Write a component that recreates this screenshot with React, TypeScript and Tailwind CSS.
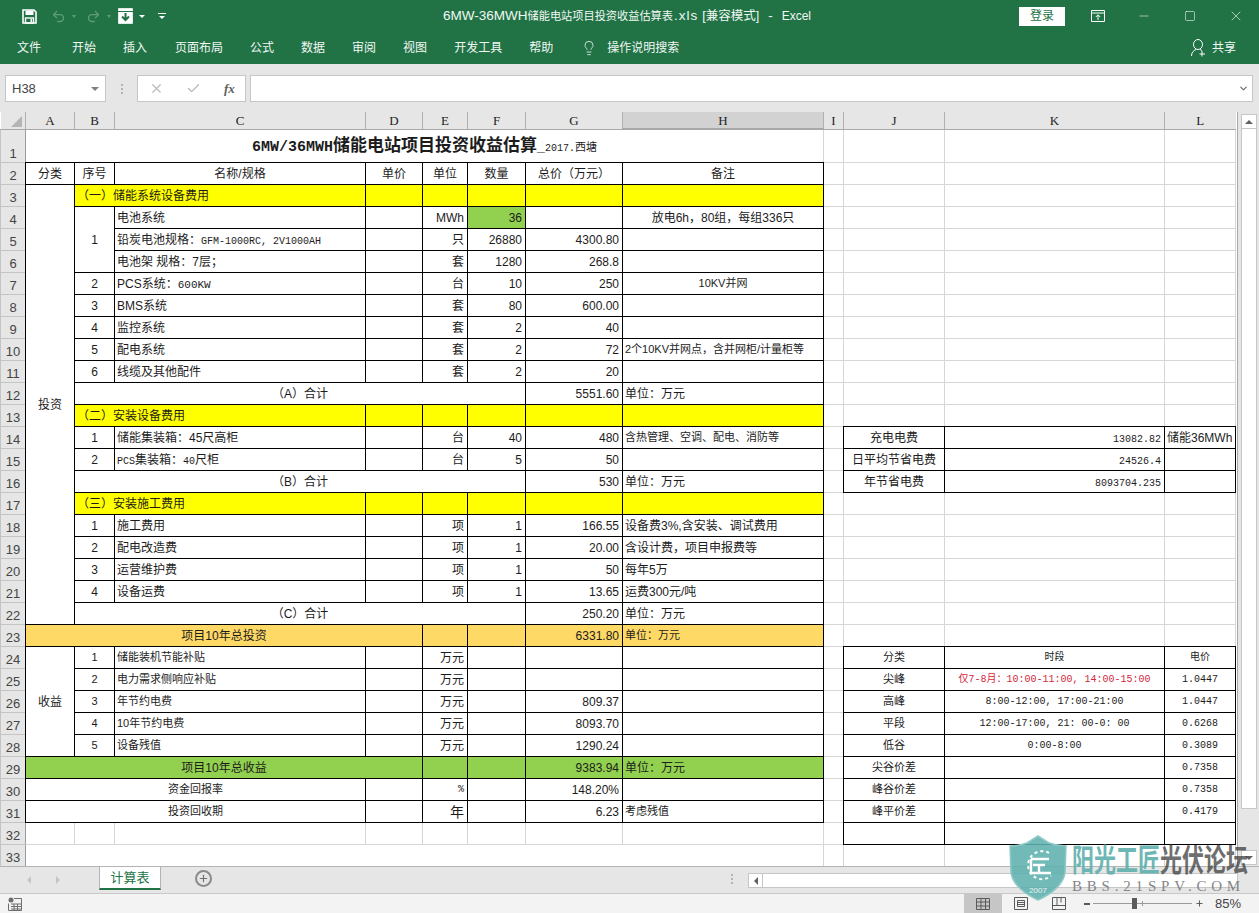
import React from "react";
import { Undo2, Redo2, ChevronDown, Check, X, Lightbulb, Minus, Square, Plus } from "lucide-react";

const FONT = "font-['Liberation_Sans','Noto_Sans_CJK_SC',sans-serif]";
const MONO = "font-['Liberation_Mono','Noto_Sans_CJK_SC',monospace]";

type TdProps = {
  b?: boolean;
  c?: string;
  colSpan?: number;
  rowSpan?: number;
  children?: React.ReactNode;
};

function Td({ b = true, c = "", colSpan, rowSpan, children }: TdProps) {
  const edge = b ? "border border-double border-black" : "border border-solid border-[#d6d6d6]";
  const pad = c.includes("text-[11px]") || colSpan === 8 ? "" : "pt-[2px]";
  return (
    <td colSpan={colSpan} rowSpan={rowSpan} className={`${edge} ${c} ${pad} overflow-hidden whitespace-nowrap align-middle`}>
      {children}
    </td>
  );
}

const CTR = "text-center";
const LFT = "text-left pl-[2px]";
const RGT = "text-right pr-[3px]";
const SM = "text-[11px]";
const YEL = "bg-[#ffff00]";
const ORG = "bg-[#ffd966]";
const GRN = "bg-[#92d050]";

const rightRows: Record<number, [React.ReactNode, React.ReactNode, React.ReactNode]> = {
  14: ["充电电费", <span className={`${MONO} text-[10px]`}>13082.82</span>, "储能36MWh"],
  15: ["日平均节省电费", <span className={`${MONO} text-[10px]`}>24526.4</span>, ""],
  16: ["年节省电费", <span className={`${MONO} text-[10px]`}>8093704.235</span>, ""],
};

const tariff: Record<number, [string, React.ReactNode, string]> = {
  24: ["分类", "时段", "电价"],
  25: ["尖峰", <span className="text-[#d2283c]">仅7-8月：10:00-11:00, 14:00-15:00</span>, "1.0447"],
  26: ["高峰", "8:00-12:00, 17:00-21:00", "1.0447"],
  27: ["平段", "12:00-17:00, 21: 00-0: 00", "0.6268"],
  28: ["低谷", "0:00-8:00", "0.3089"],
  29: ["尖谷价差", "", "0.7358"],
  30: ["峰谷价差", "", "0.7358"],
  31: ["峰平价差", "", "0.4179"],
  32: ["", "", ""],
};

function RightCells({ n }: { n: number }) {
  if (rightRows[n]) {
    const [j, k, l] = rightRows[n];
    return (
      <>
        <Td b={false} />
        <Td c={CTR}>{j}</Td>
        <Td c={RGT}>{k}</Td>
        <Td c={LFT}>{l}</Td>
      </>
    );
  }
  if (tariff[n]) {
    const [j, k, l] = tariff[n];
    return (
      <>
        <Td b={false} />
        <Td c={`${CTR} ${SM}`}>{j}</Td>
        <Td c={`${CTR} ${MONO} text-[10px]`}>{k}</Td>
        <Td c={`${CTR} ${MONO} text-[10px]`}>{l}</Td>
      </>
    );
  }
  return (
    <>
      <Td b={false} />
      <Td b={false} />
      <Td b={false} />
      <Td b={false} />
    </>
  );
}

function Row({ n, tall, children }: { n: number; tall?: boolean; children?: React.ReactNode }) {
  return (
    <tr className={tall ? "h-[33px]" : "h-[22px]"}>
      <th className="border border-solid border-[#c4c4c4] border-r-[#9c9c9c] bg-[#e6e6e6] p-0 align-bottom text-[13px] leading-[17px] font-normal text-[#444444]">
        {n}
      </th>
      {children}
      <RightCells n={n} />
    </tr>
  );
}

type LineProps = {
  n: number;
  lead?: React.ReactNode;
  seq?: string;
  seqCls?: string;
  name?: React.ReactNode;
  nameCls?: string;
  unit?: React.ReactNode;
  unitCls?: string;
  qty?: string;
  qtyCls?: string;
  total?: string;
  note?: React.ReactNode;
  noteCls?: string;
};

function Line({ n, lead, seq, seqCls = "", name, nameCls = "", unit, unitCls = "", qty, qtyCls = "", total, note, noteCls = LFT }: LineProps) {
  return (
    <Row n={n}>
      {lead}
      {seq !== undefined && <Td c={`${CTR} ${seqCls}`}>{seq}</Td>}
      <Td c={`${LFT} ${nameCls}`}>{name}</Td>
      <Td />
      <Td c={`${RGT} ${unitCls}`}>{unit}</Td>
      <Td c={`${RGT} ${qtyCls}`}>{qty}</Td>
      <Td c={RGT}>{total}</Td>
      <Td c={noteCls}>{note}</Td>
    </Row>
  );
}

function Band({ n, text }: { n: number; text: string }) {
  return (
    <Row n={n}>
      <Td colSpan={2} c={`${YEL} text-left pl-[2px]`}>{text}</Td>
      <Td c={YEL} />
      <Td c={YEL} />
      <Td c={YEL} />
      <Td c={YEL} />
      <Td c={YEL} />
    </Row>
  );
}

function Sum({ n, text, total }: { n: number; text: string; total: string }) {
  return (
    <Row n={n}>
      <Td colSpan={5} c={CTR}>{text}</Td>
      <Td c={RGT}>{total}</Td>
      <Td c={LFT}>单位：万元</Td>
    </Row>
  );
}

function Total({ n, text, total, bg, noteCls = "" }: { n: number; text: string; total: string; bg: string; noteCls?: string }) {
  return (
    <Row n={n}>
      <Td colSpan={4} c={`${bg} ${CTR}`}>{text}</Td>
      <Td c={bg} />
      <Td c={bg} />
      <Td c={`${bg} ${RGT}`}>{total}</Td>
      <Td c={`${bg} ${LFT} ${noteCls}`}>单位：万元</Td>
    </Row>
  );
}

const widths = [25, 49, 40, 251, 57, 45, 58, 97, 201, 20, 101, 220, 71];
const cols = ["A", "B", "C", "D", "E", "F", "G", "H", "I", "J", "K", "L"];

function Sheet() {
  return (
    <table className={`table-fixed border-collapse w-[1235px] ${FONT} text-[12px] leading-none text-[#1c1c1c] bg-white`}>
      <colgroup>
        {widths.map((w, i) => (
          <col key={i} style={{ width: w }} />
        ))}
      </colgroup>
      <thead>
        <tr className="h-[17px]">
          <th className="relative bg-[#e6e6e6] border-b border-solid border-[#a8a8a8] p-0">
            <span className="absolute right-[3px] bottom-[2px] w-0 h-0 border-l-[11px] border-l-transparent border-b-[11px] border-b-[#b4b4b4]" />
          </th>
          {cols.map((c) => (
            <th
              key={c}
              className={`font-['Liberation_Serif',serif] border-l border-b border-solid border-l-[#b0b0b0] border-b-[#a8a8a8] p-0 text-[13px] font-normal text-[#222222] ${
                c === "H" ? "bg-[#d2d2d2] border-b-2 border-b-[#217346]" : "bg-[#e6e6e6]"
              }`}
            >
              {c}
            </th>
          ))}
        </tr>
      </thead>
      <tbody>
        <Row n={1} tall>
          <Td b={false} colSpan={8} c={`${CTR} border-l-0`}>
            <span className={`${MONO} font-bold text-[15px]`}>6MW/36MWH</span>
            <span className="font-bold text-[17px]">储能电站项目投资收益估算</span>
            <span className="font-bold text-[14px]">_</span>
            <span className={`${MONO} text-[10px]`}>2017.</span>
            <span className="text-[11px]">西塘</span>
          </Td>
        </Row>
        <Row n={2}>
          <Td c={CTR}>分类</Td>
          <Td c={CTR}>序号</Td>
          <Td c={CTR}>名称/规格</Td>
          <Td c={CTR}>单价</Td>
          <Td c={CTR}>单位</Td>
          <Td c={CTR}>数量</Td>
          <Td c={CTR}>总价（万元）</Td>
          <Td c={CTR}>备注</Td>
        </Row>
        <Row n={3}>
          <Td rowSpan={20} c={CTR}>投资</Td>
          <Td colSpan={2} c={`${YEL} text-left pl-[2px]`}>（一）储能系统设备费用</Td>
          <Td c={YEL} />
          <Td c={YEL} />
          <Td c={YEL} />
          <Td c={YEL} />
          <Td c={YEL} />
        </Row>
        <Line
          n={4}
          lead={<Td rowSpan={3} c={CTR}>1</Td>}
          name="电池系统"
          unit="MWh"
          qty="36"
          qtyCls={GRN}
          note="放电6h，80组，每组336只"
          noteCls={CTR}
        />
        <Line
          n={5}
          name={
            <>
              铅炭电池规格：<span className={`${MONO} text-[10px]`}>GFM-1000RC, 2V1000AH</span>
            </>
          }
          unit="只"
          qty="26880"
          total="4300.80"
        />
        <Line n={6} name="电池架 规格：7层；" unit="套" qty="1280" total="268.8" />
        <Line
          n={7}
          seq="2"
          name={
            <>
              PCS系统：<span className={`${MONO} text-[11px]`}>600KW</span>
            </>
          }
          unit="台"
          qty="10"
          total="250"
          note="10KV并网"
          noteCls={`${CTR} ${SM}`}
        />
        <Line n={8} seq="3" name="BMS系统" unit="套" qty="80" total="600.00" />
        <Line n={9} seq="4" name="监控系统" unit="套" qty="2" total="40" />
        <Line
          n={10}
          seq="5"
          name="配电系统"
          unit="套"
          qty="2"
          total="72"
          note="2个10KV并网点，含并网柜/计量柜等"
          noteCls={`${LFT} ${SM}`}
        />
        <Line n={11} seq="6" name="线缆及其他配件" unit="套" qty="2" total="20" />
        <Sum n={12} text="（A）合计" total="5551.60" />
        <Band n={13} text="（二）安装设备费用" />
        <Line n={14} seq="1" name="储能集装箱：45尺高柜" unit="台" qty="40" total="480" note="含热管理、空调、配电、消防等" noteCls={`${LFT} ${SM}`} />
        <Line
          n={15}
          seq="2"
          name={
            <>
              <span className={`${MONO} text-[10px]`}>PCS</span>集装箱：<span className={`${MONO} text-[10px]`}>40</span>尺柜
            </>
          }
          unit="台"
          qty="5"
          total="50"
        />
        <Sum n={16} text="（B）合计" total="530" />
        <Band n={17} text="（三）安装施工费用" />
        <Line n={18} seq="1" name="施工费用" unit="项" qty="1" total="166.55" note="设备费3%,含安装、调试费用" />
        <Line n={19} seq="2" name="配电改造费" unit="项" qty="1" total="20.00" note="含设计费，项目申报费等" />
        <Line n={20} seq="3" name="运营维护费" unit="项" qty="1" total="50" note="每年5万" />
        <Line n={21} seq="4" name="设备运费" unit="项" qty="1" total="13.65" note="运费300元/吨" />
        <Sum n={22} text="（C）合计" total="250.20" />
        <Total n={23} text="项目10年总投资" total="6331.80" bg={ORG} noteCls={SM} />
        <Line
          n={24}
          lead={<Td rowSpan={5} c={CTR}>收益</Td>}
          seq="1"
          seqCls={SM}
          name="储能装机节能补贴"
          nameCls={SM}
          unit="万元"
        />
        <Line n={25} seq="2" seqCls={SM} name="电力需求侧响应补贴" nameCls={SM} unit="万元" />
        <Line n={26} seq="3" seqCls={SM} name="年节约电费" nameCls={SM} unit="万元" total="809.37" />
        <Line n={27} seq="4" seqCls={SM} name="10年节约电费" nameCls={SM} unit="万元" total="8093.70" />
        <Line n={28} seq="5" seqCls={SM} name="设备残值" nameCls={SM} unit="万元" total="1290.24" />
        <Total n={29} text="项目10年总收益" total="9383.94" bg={GRN} />
        <Row n={30}>
          <Td colSpan={3} c={`${CTR} ${SM}`}>资金回报率</Td>
          <Td />
          <Td c={`${RGT} ${MONO} text-[10px]`}>%</Td>
          <Td />
          <Td c={RGT}>148.20%</Td>
          <Td />
        </Row>
        <Row n={31}>
          <Td colSpan={3} c={`${CTR} ${SM}`}>投资回收期</Td>
          <Td />
          <Td c={`${RGT} text-[14px]`}>年</Td>
          <Td />
          <Td c={RGT}>6.23</Td>
          <Td c={`${LFT} ${SM}`}>考虑残值</Td>
        </Row>
        <Row n={32}>
          <Td b={false} />
          <Td b={false} />
          <Td b={false} />
          <Td b={false} />
          <Td b={false} />
          <Td b={false} />
          <Td b={false} />
          <Td b={false} />
        </Row>
        <Row n={33}>
          <Td b={false} colSpan={8} />
        </Row>
      </tbody>
    </table>
  );
}

function SaveIcon() {
  return (
    <svg width="15" height="15" viewBox="0 0 15 15" className="text-white">
      <path d="M1 1h11l2 2v11H1z" fill="none" stroke="currentColor" strokeWidth="1.6" />
      <rect x="3.5" y="1.5" width="8" height="4.5" fill="currentColor" />
      <rect x="3.5" y="9" width="8" height="5" fill="none" stroke="currentColor" strokeWidth="1.4" />
      <rect x="8.5" y="10" width="1.6" height="3" fill="currentColor" />
    </svg>
  );
}

function QatBox() {
  return (
    <svg width="15" height="16" viewBox="0 0 15 16">
      <rect x="0.7" y="0.7" width="13.6" height="14.6" fill="#ffffff" stroke="#ffffff" strokeWidth="1" />
      <rect x="0" y="3" width="15" height="1" fill="#217346" />
      <path d="M7.5 5v7M4 8.5l3.5 3.5L11 8.5" fill="none" stroke="#217346" strokeWidth="2" />
    </svg>
  );
}

function Caret() {
  return <span className="w-0 h-0 border-x-[3px] border-x-transparent border-t-[3px] border-t-white" />;
}

function ShareIcon() {
  return (
    <svg width="15" height="18" viewBox="0 0 15 18">
      <ellipse cx="7" cy="5.500" rx="4.500" ry="5" fill="none" stroke="#ffffff" strokeWidth="1" />
      <path d="M0.500 17c0-3.500 2-5.500 4.500-6.500M9 10.500c0.800 0.300 1.500 0.700 2 1.200" fill="none" stroke="#ffffff" strokeWidth="1" />
      <path d="M11 12v5.500M8.500 15h5.500" fill="none" stroke="#ffffff" strokeWidth="1" />
    </svg>
  );
}

function Shield() {
  return (
    <svg width="58" height="66" viewBox="0 0 58 66">
      <path d="M29 1 L40 8 Q48 11 57 11 L56 38 Q53 54 29 65 Q5 54 2 38 L1 11 Q10 11 18 8 Z" fill="#5fb0ae" fillOpacity="0.88" stroke="#8fc9c7" strokeWidth="1.500" />
      <path d="M40 18 A14 14 0 1 0 42 41" fill="none" stroke="#ffffff" strokeWidth="2" strokeDasharray="3 3" />
      <path d="M22 24 H40 M22 24 V38 M24 30 H36 M30 30 V38 M22 38 H42" fill="none" stroke="#ffffff" strokeWidth="2.400" />
      <text x="29" y="58" textAnchor="middle" fontSize="8" fill="#e6f4f4" fontFamily="Liberation Sans">2007</text>
    </svg>
  );
}

const ribbon: [string, string][] = [
  ["文件", "mr-[31px]"],
  ["开始", "mr-[27px]"],
  ["插入", "mr-[28px]"],
  ["页面布局", "mr-[27px]"],
  ["公式", "mr-[27px]"],
  ["数据", "mr-[27px]"],
  ["审阅", "mr-[27px]"],
  ["视图", "mr-[27px]"],
  ["开发工具", "mr-[27px]"],
  ["帮助", "mr-[28px]"],
];

export default function App() {
  return (
    <div className={`relative w-[1259px] h-[913px] overflow-hidden flex flex-col bg-[#e6e6e6] ${FONT} text-[12px]`}>
      {/* title bar */}
      <div className="h-[32px] shrink-0 bg-[#217346] flex items-center text-[#f1f7f3]">
        <div className="w-[443px] shrink-0 flex items-center pl-[22px]">
          <SaveIcon />
          <Undo2 size={15} strokeWidth={2.2} className="ml-[14px] text-[#5f9c7c]" />
          <span className="ml-[6px] w-0 h-0 border-x-[2px] border-x-transparent border-t-[3px] border-t-[#5f9c7c]" />
          <Redo2 size={15} strokeWidth={2.2} className="ml-[10px] text-[#5f9c7c]" />
          <span className="ml-[6px] w-0 h-0 border-x-[2px] border-x-transparent border-t-[3px] border-t-[#5f9c7c]" />
          <span className="ml-[7px] flex"><QatBox /></span>
          <span className="ml-[6px] flex"><Caret /></span>
          <span className="ml-[13px] flex flex-col items-center gap-[2px]">
            <span className="w-[8px] h-px bg-white" />
            <Caret />
          </span>
        </div>
        <div className="flex items-center whitespace-nowrap text-[13.5px]">
          <span>6MW-36MWH</span>
          <span className="text-[11.2px]">储能电站项目投资收益估算表</span>
          <span className="ml-[1px] tracking-[1px]">.xls</span>
          <span className="ml-[4px] text-[12.5px]">[兼容模式]</span>
          <span className="ml-[9px]">-</span>
          <span className="ml-[9px] text-[12px]">Excel</span>
        </div>
        <div className="flex-1 flex items-center justify-end">
          <div className="w-[46px] h-[19px] mr-[26px] bg-white text-[#217346] text-center leading-[19px]">登录</div>
          <svg width="14" height="12" viewBox="0 0 14 12" className="mr-[32px]">
            <path d="M0.500 0.500h13v11h-13zM0.500 3h13M7 10V5M4.800 7L7 4.800 9.200 7" fill="none" stroke="#ffffff" strokeWidth="1" />
          </svg>
          <Minus size={14} strokeWidth={1} className="mr-[33px]" />
          <Square size={12} strokeWidth={1.2} className="mr-[32px]" />
          <X size={16} strokeWidth={1} className="mr-[15px]" />
        </div>
      </div>

      {/* ribbon tabs */}
      <div className="h-[32px] shrink-0 bg-[#217346] flex items-center pl-[17px] text-[#f1f7f3] whitespace-nowrap">
        {ribbon.map(([t, m]) => (
          <span key={t} className={m}>{t}</span>
        ))}
        <Lightbulb size={16} strokeWidth={1.200} />
        <span className="ml-[10px]">操作说明搜索</span>
        <span className="ml-auto mr-[23px] flex items-center gap-[6px]">
          <ShareIcon />
          共享
        </span>
      </div>

      {/* formula bar */}
      <div className="h-[48px] shrink-0 flex items-start pt-[11px] pl-[5px] bg-[#e6e6e6]">
        <div className="w-[101px] h-[27px] bg-white border border-[#c6c6c6] flex items-center justify-between pl-[6px] pr-[6px] text-[#444444] text-[13px]">
          H38
          <span className="w-0 h-0 border-x-[4px] border-x-transparent border-t-[4px] border-t-[#808080]" />
        </div>
        <div className="w-[31px] h-[27px] flex flex-col items-center justify-center gap-[2px]">
          <span className="w-[2px] h-[2px] bg-[#b4b4b4]" />
          <span className="w-[2px] h-[2px] bg-[#b4b4b4]" />
          <span className="w-[2px] h-[2px] bg-[#b4b4b4]" />
        </div>
        <div className="w-[109px] h-[27px] bg-white border border-[#c6c6c6] flex items-center text-[#b8b8b8]">
          <X size={15} strokeWidth={1.800} className="ml-[11px]" />
          <Check size={15} strokeWidth={2} className="ml-[22px]" />
          <span className="ml-[23px] font-['Liberation_Serif'] italic font-bold text-[13px] text-[#606060]">fx</span>
        </div>
        <div className="w-[1003px] ml-[4px] h-[27px] bg-white border border-[#c6c6c6] flex items-center justify-end pr-[3px] text-[#6c6c6c]">
          <ChevronDown size={11} strokeWidth={2.600} />
        </div>
      </div>

      {/* sheet */}
      <div className="h-[754px] shrink-0 flex overflow-hidden bg-[#e6e6e6]">
        <div className="w-[1238px] shrink-0 border-r border-[#a8a8a8] bg-white overflow-hidden">
          <Sheet />
        </div>
        <div className="w-[3px] shrink-0 bg-[#e6e6e6]" />
        <div className="w-[16px] shrink-0 flex flex-col pt-[2px]">
          <div className="h-[15px] bg-white border border-[#c6c6c6] flex items-center justify-center">
            <span className="w-0 h-0 border-x-[4px] border-x-transparent border-b-[4px] border-b-[#606060]" />
          </div>
          <div className="h-[680px] bg-white border-x border-b border-[#c6c6c6]" />
          <div className="mt-auto h-[15px] mb-[1px] bg-white border border-[#c6c6c6] flex items-center justify-center">
            <span className="w-0 h-0 border-x-[4px] border-x-transparent border-t-[4px] border-t-[#606060]" />
          </div>
        </div>
      </div>

      {/* tab bar */}
      <div className="h-[28px] shrink-0 relative flex items-start bg-[#e6e6e6] border-t border-b border-t-[#b4b4b4] border-b-[#c8c8c8]">
        <span className="ml-[27px] mt-[9px] w-0 h-0 border-y-[4px] border-y-transparent border-r-[4px] border-r-[#c4c4c4]" />
        <span className="ml-[25px] mt-[9px] w-0 h-0 border-y-[4px] border-y-transparent border-l-[4px] border-l-[#c4c4c4]" />
        <div className="ml-[39px] w-[62px] h-[23px] bg-white border-x border-b-2 border-x-[#b4b4b4] border-b-[#217346] text-center text-[13px] leading-[21px] text-[#217346]">
          计算表
        </div>
        <div className="ml-[34px] mt-[3px] w-[17px] h-[17px] rounded-full border-2 border-[#8a8a8a] flex items-center justify-center text-[#6e6e6e]">
          <Plus size={11} strokeWidth={2.400} />
        </div>
        <div className="ml-[519px] mt-[7px] flex flex-col gap-[2px]">
          <span className="w-[2px] h-[2px] bg-[#b4b4b4]" />
          <span className="w-[2px] h-[2px] bg-[#b4b4b4]" />
          <span className="w-[2px] h-[2px] bg-[#b4b4b4]" />
        </div>
        <div className="ml-[15px] mt-[6px] w-[490px] h-[15px] bg-white border border-[#c6c6c6] flex">
          <div className="w-[14px] h-full border-r border-[#c6c6c6] flex items-center justify-center">
            <span className="w-0 h-0 border-y-[4px] border-y-transparent border-r-[4px] border-r-[#606060]" />
          </div>
        </div>
      </div>

      {/* status bar */}
      <div className="flex-1 flex items-center bg-[#f3f3f3] pl-[8px] text-[#444444]">
        <svg width="14" height="14" viewBox="0 0 14 14">
          <circle cx="3" cy="3" r="2.500" fill="#6e6e6e" />
          <path d="M6 1.500h7.500v12h-13V6.500M3 7h10M3 9.500h10M3 12h10M6 7v6M9.500 7v6" fill="none" stroke="#6e6e6e" strokeWidth="1" />
        </svg>
        <div className="ml-[942px] w-[38px] h-[19px] bg-[#c6c6c6] flex items-center justify-center">
          <svg width="14" height="12" viewBox="0 0 14 12">
            <path d="M0.500 0.500h13v11h-13zM0.500 4h13M0.500 8h13M5 0.500v11M9.500 0.500v11" fill="none" stroke="#5a5a5a" strokeWidth="1" />
          </svg>
        </div>
        <svg width="14" height="13" viewBox="0 0 14 13" className="ml-[12px]">
          <path d="M0.500 0.500h13v12h-13zM3.500 3.500h7v6h-7zM3.500 5.500h7M3.500 7.500h7" fill="none" stroke="#5a5a5a" strokeWidth="1" />
        </svg>
        <svg width="14" height="13" viewBox="0 0 14 13" className="ml-[24px]">
          <path d="M0.500 0.500h13v12h-13zM0.500 8.500h13M5 0.500v8M9 0.500v5" fill="none" stroke="#5a5a5a" strokeWidth="1" />
        </svg>
        <span className="ml-[18px] w-[6px] h-[2px] bg-[#5a5a5a]" />
        <div className="relative ml-[3px] w-[99px] h-px bg-[#9a9a9a]">
          <span className="absolute left-[39px] -top-[5px] w-[5px] h-[11px] bg-[#5a5a5a]" />
          <span className="absolute left-[49px] -top-[2px] w-px h-[5px] bg-[#9a9a9a]" />
        </div>
        <Plus size={9} strokeWidth={2.600} className="ml-[3px] text-[#5a5a5a]" />
        <span className="ml-[11px] text-[13px]">85%</span>
      </div>

      {/* forum watermark */}
      <div className="absolute left-[1009px] top-[835px] flex items-start pointer-events-none">
        <Shield />
        <div className="ml-[5px] pt-[8px] flex flex-col">
          <div className="flex text-[22px] leading-[26px] font-bold whitespace-nowrap scale-y-[1.4] origin-top">
            <span className="text-[#5fb0ae] opacity-90">阳光工匠</span>
            <span className="text-[#3f3f3f] opacity-75">光伏论坛</span>
          </div>
          <div className="mt-[11px] font-['Liberation_Serif',serif] text-[15px] leading-[13px] tracking-[4.8px] text-[#858585] whitespace-nowrap">BBS.21SPV.COM</div>
        </div>
      </div>
    </div>
  );
}
